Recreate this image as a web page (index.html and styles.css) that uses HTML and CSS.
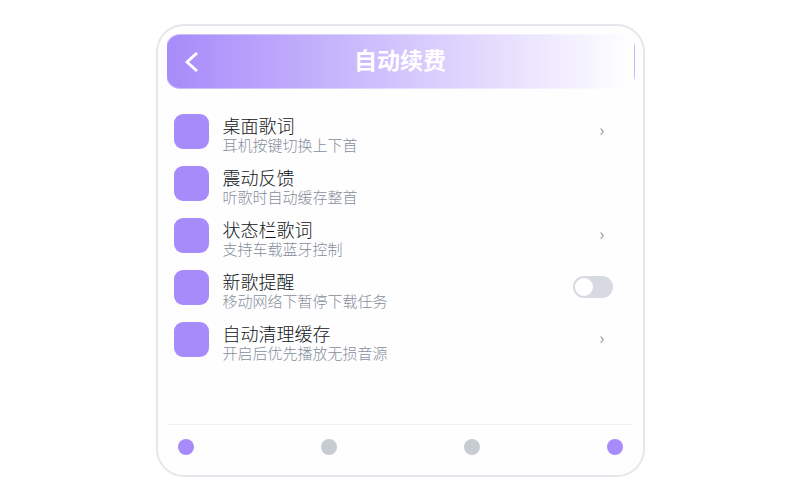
FILE: index.html
```html
<!DOCTYPE html>
<html lang="zh-CN">
<head>
<meta charset="utf-8">
<meta name="viewport" content="width=device-width, initial-scale=1">
<title>自动续费</title>
<link rel="stylesheet" href="styles.css">
</head>
<body>
<main class="card">
  <header class="header">
    <button class="back" type="button" aria-label="返回">
      <svg width="14" height="22" viewBox="0 0 14 22" fill="none" stroke="currentColor" stroke-width="3" stroke-linejoin="round"><path d="M13 2 3 11l10 9"/></svg>
    </button>
    <h1 class="title">自动续费</h1>
  </header>
  <ul class="list">
    <li class="row">
      <span class="icon"></span>
      <div class="text"><span class="name">桌面歌词</span><span class="desc">耳机按键切换上下首</span></div>
      <span class="arrow">›</span>
    </li>
    <li class="row">
      <span class="icon"></span>
      <div class="text"><span class="name">震动反馈</span><span class="desc">听歌时自动缓存整首</span></div>
    </li>
    <li class="row">
      <span class="icon"></span>
      <div class="text"><span class="name">状态栏歌词</span><span class="desc">支持车载蓝牙控制</span></div>
      <span class="arrow">›</span>
    </li>
    <li class="row">
      <span class="icon"></span>
      <label class="text" for="remind"><span class="name">新歌提醒</span><span class="desc">移动网络下暂停下载任务</span></label>
      <input class="switch" id="remind" type="checkbox" role="switch">
    </li>
    <li class="row">
      <span class="icon"></span>
      <div class="text"><span class="name">自动清理缓存</span><span class="desc">开启后优先播放无损音源</span></div>
      <span class="arrow">›</span>
    </li>
  </ul>
  <nav class="tabs">
    <button class="tab active" type="button" aria-label="标签一"></button>
    <button class="tab" type="button" aria-label="标签二"></button>
    <button class="tab" type="button" aria-label="标签三"></button>
    <button class="tab active" type="button" aria-label="标签四"></button>
  </nav>
</main>
</body>
</html>
```

FILE: styles.css
```css
* {
  box-sizing: border-box;
}

body {
  margin: 0;
  padding: 24px 16px 22px;
  background: #fff;
  color: #111620;
  font-family: "Noto Sans CJK SC", sans-serif;
  font-weight: 300;
}

button {
  padding: 0;
  border: 0;
  background: none;
  color: inherit;
}

.card {
  display: flex;
  flex-direction: column;
  max-width: 489px;
  min-height: calc(100vh - 47px);
  margin: 0 auto;
  padding: 8px;
  border: 2px solid #e6e6ec;
  border-radius: 28px;
  background: #fefeff;
}

.header {
  display: grid;
  grid-template-columns: 32px 1fr 32px;
  align-items: center;
  height: 55px;
  padding: 0 8px;
  border: 1px solid rgba(255, 255, 255, 0.4);
  border-radius: 14px;
  background: linear-gradient(90deg, #a78bfa, #fff);
  color: #fff;
}

.back {
  display: grid;
  place-items: center;
  height: 32px;
}

.title {
  margin: 0;
  padding-bottom: 6px;
  font-size: 23px;
  line-height: 32px;
  font-weight: 700;
  text-align: center;
}

.list {
  flex: 1;
  margin: 0;
  padding: 16px 8px 0;
  list-style: none;
}

.row {
  display: flex;
  align-items: center;
  gap: 14px;
  height: 52px;
  padding-right: 22px;
}

.icon {
  width: 35px;
  height: 35px;
  border-radius: 9px;
  background: #a78bfa;
}

.text {
  flex: 1;
  padding-top: 6px;
}

.name,
.desc {
  display: block;
}

.name {
  font-size: 18px;
  line-height: 22px;
}

.desc {
  color: #868e9b;
  font-size: 15px;
  line-height: 18px;
}

.arrow {
  padding-bottom: 3px;
  color: #9ca3af;
  font-family: "Noto Sans", sans-serif;
  font-size: 16px;
  font-weight: 400;
  line-height: 20px;
}

.switch {
  appearance: none;
  width: 40px;
  height: 22px;
  margin: 0 -8px 0 0;
  padding: 2px;
  border-radius: 11px;
  background: #d7dae1;
}

.switch::before {
  content: "";
  display: block;
  width: 18px;
  height: 18px;
  border-radius: 50%;
  background: #fff;
}

.switch:checked::before {
  margin-left: auto;
}

.tabs {
  display: flex;
  justify-content: space-between;
  margin: 0 2px;
  padding: 14px 10px 12px;
  border-top: 1px solid #f0f0f3;
}

.tab {
  width: 16px;
  height: 16px;
  border-radius: 50%;
  background: #c7cbd2;
}

.tab.active {
  background: #a78bfa;
}
```
